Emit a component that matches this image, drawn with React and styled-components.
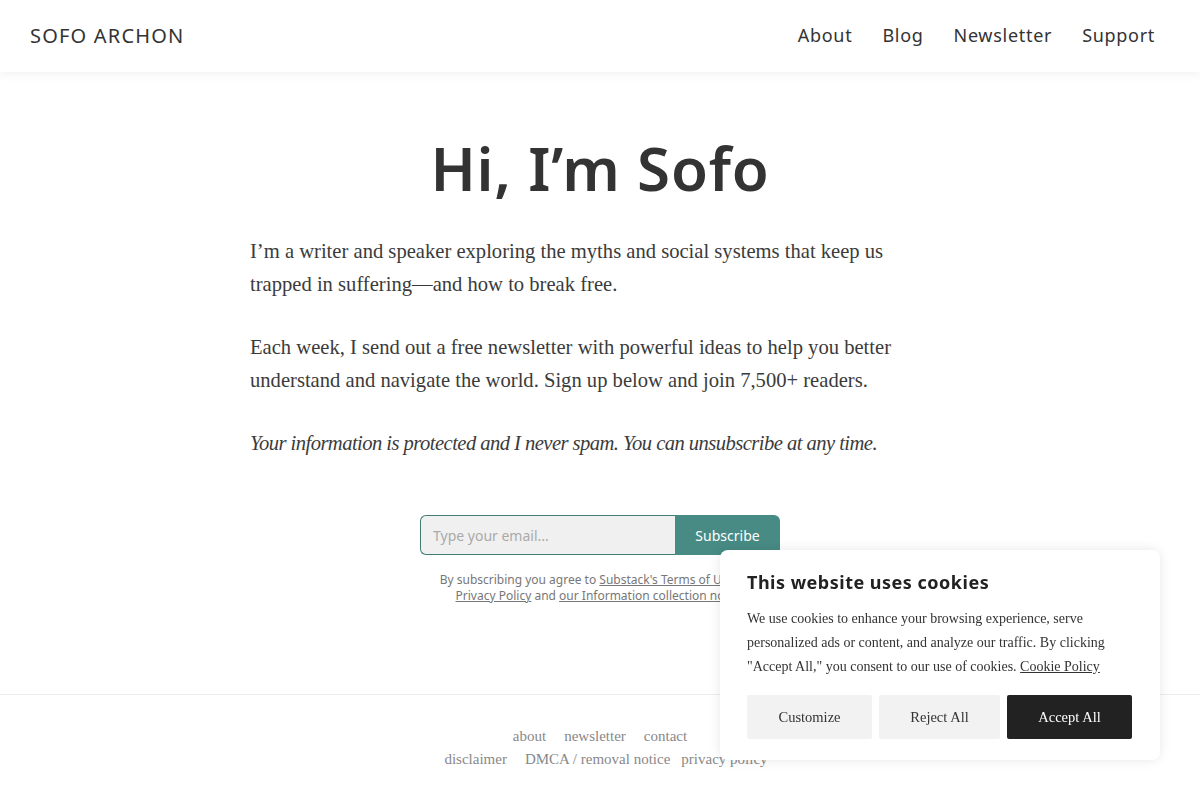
import React from 'react';
import styled, { createGlobalStyle } from 'styled-components';

const GlobalStyle = createGlobalStyle`
	body {
		margin: 0;
		background: #ffffff;
		font-family: 'Liberation Serif', serif;
	}
	* {
		box-sizing: border-box;
	}
`;

const Page = styled.div`
	min-height: 800px;
	display: flex;
	flex-direction: column;
`;

const Header = styled.header`
	height: 72px;
	display: flex;
	align-items: center;
	justify-content: space-between;
	padding: 0 45px 0 30px;
	box-shadow: 0 2px 10px rgba(0, 0, 0, 0.06);
	position: relative;
	z-index: 1;
`;

const Logo = styled.div`
	font-family: 'Noto Sans', sans-serif;
	font-size: 20px;
	color: #333;
	letter-spacing: 1.2px;
	margin-top: -2px;
`;

const Nav = styled.nav`
	display: flex;
	gap: 30px;
	margin-top: -2px;
`;

const NavLink = styled.a`
	font-family: 'Noto Sans', sans-serif;
	font-size: 18px;
	letter-spacing: 0.7px;
	color: #333;
	text-decoration: none;
`;

const Main = styled.main`
	display: flex;
	flex-direction: column;
	align-items: center;
	padding: 56px 0 0;
	height: 623px;
	border-bottom: 1px solid #ececec;
`;

const Title = styled.h1`
	font-family: 'Noto Sans', sans-serif;
	font-weight: 600;
	font-size: 60px;
	letter-spacing: 0.8px;
	color: #333;
	margin: 0 0 27px;
	line-height: 80px;
`;

const Copy = styled.div`
	width: 700px;
	padding-right: 20px;
	display: flex;
	flex-direction: column;
	gap: 30px;
`;

const Para = styled.p`
	margin: 0;
	font-family: 'Liberation Serif', serif;
	font-size: 20.6px;
	line-height: 33px;
	color: #3b3b3b;
	font-style: ${(p) => (p.italic ? 'italic' : 'normal')};
	letter-spacing: ${(p) => (p.italic ? '-0.55px' : 'normal')};
`;

const Form = styled.form`
	display: flex;
	margin-top: 55px;
	width: 360px;
	height: 40px;
`;

const Input = styled.input`
	flex: 1;
	border: 1px solid #3f7d75;
	border-right: none;
	border-radius: 6px 0 0 6px;
	background: #f0f0f0;
	padding: 0 12px;
	font-family: 'Noto Sans', sans-serif;
	font-size: 14px;
	outline: none;
	&::placeholder {
		color: #aaa;
	}
`;

const SubscribeButton = styled.button`
	width: 105px;
	border: none;
	border-radius: 0 6px 6px 0;
	background: #478b84;
	color: #fff;
	font-family: 'Noto Sans', sans-serif;
	font-size: 14px;
`;

const Fine = styled.p`
	margin: 17px 0 0;
	font-family: 'Noto Sans', sans-serif;
	font-size: 12px;
	line-height: 16px;
	color: #777;
	text-align: center;
	a {
		color: #777;
	}
`;

const Footer = styled.footer`
	display: flex;
	flex-direction: column;
	align-items: center;
	padding-top: 32px;
	gap: 4px;
`;

const FooterRow = styled.div`
	display: flex;
	gap: 18px;
	padding-left: ${(p) => p.shift || 0}px;
`;

const FooterLink = styled.a`
	font-family: 'Liberation Serif', serif;
	font-size: 15px;
	line-height: 19px;
	color: #888;
	text-decoration: none;
	margin-left: ${(p) => p.pull || 0}px;
`;

const CookieBox = styled.div`
	position: fixed;
	left: 720px;
	top: 550px;
	width: 440px;
	height: 210px;
	background: #fff;
	border-radius: 8px;
	box-shadow: 0 0 12px rgba(0, 0, 0, 0.1);
	padding: 20px 27px;
	z-index: 5;
`;

const CookieTitle = styled.h2`
	margin: 0 0 13px;
	font-family: 'Noto Sans', sans-serif;
	font-weight: 700;
	font-size: 18px;
	letter-spacing: 0.5px;
	line-height: 24px;
	color: #222;
`;

const CookieText = styled.p`
	margin: 0;
	font-family: 'Liberation Serif', serif;
	font-size: 14px;
	line-height: 24px;
	color: #333;
	a {
		color: #333;
	}
`;

const Buttons = styled.div`
	display: flex;
	gap: 7px;
	margin-top: 16px;
`;

const CookieButton = styled.button`
	height: 44px;
	width: ${(p) => p.w}px;
	border: none;
	border-radius: 2px;
	background: ${(p) => (p.dark ? '#222' : '#f2f2f2')};
	color: ${(p) => (p.dark ? '#fff' : '#333')};
	font-family: 'Liberation Serif', serif;
	font-size: 14.5px;
`;

export default function App() {
	return (
		<Page>
			<GlobalStyle />
			<Header>
				<Logo>SOFO ARCHON</Logo>
				<Nav>
					<NavLink href="#">About</NavLink>
					<NavLink href="#">Blog</NavLink>
					<NavLink href="#">Newsletter</NavLink>
					<NavLink href="#">Support</NavLink>
				</Nav>
			</Header>
			<Main>
				<Title>Hi, I’m Sofo</Title>
				<Copy>
					<Para>
						I’m a writer and speaker exploring the myths and social systems that keep us trapped in
						suffering—and how to break free.
					</Para>
					<Para>
						Each week, I send out a free newsletter with powerful ideas to help you better understand and
						navigate the world. Sign up below and join 7,500+ readers.
					</Para>
					<Para italic>Your information is protected and I never spam. You can unsubscribe at any time.</Para>
				</Copy>
				<Form onSubmit={(e) => e.preventDefault()}>
					<Input placeholder="Type your email..." />
					<SubscribeButton>Subscribe</SubscribeButton>
				</Form>
				<Fine>
					By subscribing you agree to <a href="#">Substack's Terms of Use</a>, our
					<br />
					<a href="#">Privacy Policy</a> and <a href="#">our Information collection notice</a>
				</Fine>
			</Main>
			<Footer>
				<FooterRow>
					<FooterLink href="#">about</FooterLink>
					<FooterLink href="#">newsletter</FooterLink>
					<FooterLink href="#">contact</FooterLink>
				</FooterRow>
				<FooterRow shift={12}>
					<FooterLink href="#">disclaimer</FooterLink>
					<FooterLink href="#">DMCA / removal notice</FooterLink>
					<FooterLink href="#" pull={-7}>
						privacy policy
					</FooterLink>
				</FooterRow>
			</Footer>
			<CookieBox>
				<CookieTitle>This website uses cookies</CookieTitle>
				<CookieText>
					We use cookies to enhance your browsing experience, serve personalized ads or content, and analyze
					our traffic. By clicking "Accept All," you consent to our use of cookies. <a href="#">Cookie Policy</a>
				</CookieText>
				<Buttons>
					<CookieButton w={125}>Customize</CookieButton>
					<CookieButton w={121}>Reject All</CookieButton>
					<CookieButton w={125} dark>
						Accept All
					</CookieButton>
				</Buttons>
			</CookieBox>
		</Page>
	);
}
